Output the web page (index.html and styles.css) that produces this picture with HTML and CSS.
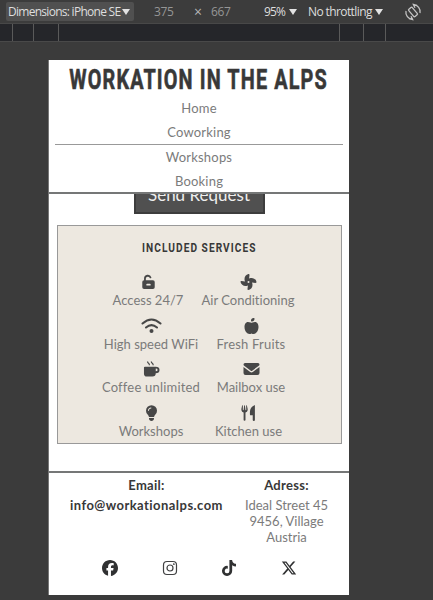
FILE: index.html
```html
<!DOCTYPE html>
<html lang="en">
<head>
<meta charset="utf-8">
<title>Workation in the Alps</title>
<link rel="stylesheet" href="styles.css">
</head>
<body>
<div class="toolbar">
  <div class="device"><span class="t-device">Dimensions: iPhone SE</span><i class="caret"></i></div>
  <span class="dim width">375</span>
  <span class="times">×</span>
  <span class="dim height">667</span>
  <span class="zoom">95%</span><i class="caret"></i>
  <span class="throttle">No throttling</span><i class="caret"></i>
  <svg class="rotate" viewBox="0 0 18 18" fill="none" stroke="#c4c4c4" stroke-width="1.3"><rect x="6.7" y="4.2" width="4.6" height="9.6" rx="1" transform="rotate(-40 9 9)"/><path d="M2 8c-.8 4 2.200 8 6.500 8.500M5 15.500l3.600 1-1.600-3.300M16 10c.8-4-2.200-8-6.500-8.500M13 2.500l-3.600-1 1.600 3.300"/></svg>
</div>
<div class="ruler"><i class="r1"></i><i class="r2"></i><i class="r3"></i><i class="r4"></i><i class="r5"></i><i class="r6"></i></div>
<div class="page">
  <header>
    <h1><span>WORKATION IN THE ALPS</span></h1>
    <nav><a>Home</a><a>Coworking</a><a>Workshops</a><a>Booking</a></nav>
  </header>
  <main>
    <div class="request"><button>Send Request</button></div>
    <section class="services">
      <h2><span>INCLUDED SERVICES</span></h2>
      <div class="row row1">
        <div class="item"><svg viewBox="0 0 16 18"><path fill-rule="evenodd" d="M3 7V5a4.200 4.200 0 0 1 8.200-1.300q.2.9-.7 1.100t-1.200-.6A2.300 2.300 0 0 0 5 5v2h8q2 0 2 2v6q0 2-2 2H3q-2 0-2-2V9q0-2 2-2zm3.500 4q-1 0-1 1t1 1h3q1 0 1-1t-1-1z"/></svg><span>Access 24/7</span></div>
        <div class="item"><svg viewBox="0 0 512 512"><path d="M258.600 0c-1.700 0-3.400 .1-5.100 .5C168 17 115.600 102.300 130.500 189.300c2.900 17 8.400 32.900 15.900 47.400L32 224H29.400C13.200 224 0 237.200 0 253.400c0 1.700 .1 3.400 .5 5.100C17 344 102.300 396.400 189.300 381.500c17-2.900 32.900-8.400 47.400-15.900L224 480v2.600c0 16.200 13.200 29.400 29.400 29.400c1.700 0 3.400-.1 5.100-.5C344 495 396.400 409.700 381.500 322.700c-2.900-17-8.400-32.900-15.900-47.400L480 288h2.600c16.200 0 29.400-13.200 29.400-29.400c0-1.700-.1-3.400-.5-5.100C495 168 409.700 115.600 322.700 130.500c-17 2.900-32.900 8.400-47.400 15.900L288 32V29.400C288 13.200 274.800 0 258.600 0zM256 224a32 32 0 1 1 0 64 32 32 0 1 1 0-64z"/></svg><span>Air Conditioning</span></div>
      </div>
      <div class="row row2">
        <div class="item"><svg class="wifi" viewBox="0 0 20 16"><path class="stroke" d="M1 5.500q9-8 18 0M4.500 9.500q5.500-4.800 11 0"/><circle cx="10" cy="13" r="2"/></svg><span>High speed WiFi</span></div>
        <div class="item"><svg viewBox="0 0 448 512"><path d="M224 112c-8.800 0-16-7.200-16-16V80c0-44.200 35.800-80 80-80h16c8.800 0 16 7.200 16 16V32c0 44.200-35.800 80-80 80H224zM0 288c0-76.300 35.700-160 112-160c27.300 0 59.700 10.300 82.700 19.300c18.800 7.300 39.900 7.300 58.700 0c22.900-8.900 55.400-19.300 82.700-19.300c76.300 0 112 83.700 112 160c0 128-80 224-160 224c-16.500 0-38.100-6.600-51.500-11.300c-8.100-2.800-16.900-2.800-25 0c-13.400 4.700-35 11.300-51.500 11.300C80 512 0 416 0 288z"/></svg><span class="wide">Fresh Fruits</span></div>
      </div>
      <div class="row row3">
        <div class="item"><svg viewBox="0 0 17 17"><path class="thin" d="M4.300.5q0 1.300 1 2t1 2M8.300.5q0 1.300 1 2t1 2"/><path fill-rule="evenodd" d="M1.500 6H13q4 0 4 3.500T13 13q0 3.500-3.500 3.500h-6Q.5 16.500.5 13.500V7q0-1 1-1zM13 8v3q2 0 2-1.500T13 8z"/></svg><span class="wide">Coffee unlimited</span></div>
        <div class="item"><svg viewBox="0 0 16 16"><path d="M1.500 2h13q1.500 0 1.500 1.500 0 .8-.7 1.300L8.700 9.700q-.7.500-1.400 0L.7 4.800Q0 4.300 0 3.500 0 2 1.500 2zM0 6l6.700 5q1.300.9 2.600 0L16 6v6q0 2-2 2H2q-2 0-2-2z"/></svg><span>Mailbox use</span></div>
      </div>
      <div class="row row4">
        <div class="item"><svg viewBox="0 0 384 512"><path fill-rule="evenodd" d="M272 384c10-34 28-57 44-78a176 176 0 1 0-248 0c16 21 34 44 44 78zM192 512c44 0 80-36 80-80v-16H112v16c0 44 36 80 80 80zM112 176c0 9-7 16-16 16s-16-7-16-16c0-53 43-96 96-96 9 0 16 7 16 16s-7 16-16 16c-35 0-64 29-64 64z"/></svg><span>Workshops</span></div>
        <div class="item kitchen"><svg viewBox="0 0 16 17"><path d="M1.200.5Q.2 4.500.5 5.500q.3 1.800 2.300 2.400V16q0 .8 1 .8t1-.8V7.900q2-.6 2.300-2.400.2-1-.8-5-.6-.4-.8 0l.1 4.800q-.5.3-.8 0L4.200.5q-.4-.4-.8 0L2.800 5.300q-.4.300-.8 0L2 .5q-.4-.4-.8 0zM14.800 0Q9.500 2 9.500 7.500V10q0 1 1 1h2v5q0 1 1.200 1t1.100-1z"/></svg><span>Kitchen use</span></div>
      </div>
    </section>
  </main>
  <footer>
    <div class="contacts">
      <div class="email"><b>Email:</b><b class="f-mail">info@workationalps.com</b></div>
      <address><b>Adress:</b><span>Ideal Street 45</span><span>9456, Village</span><span>Austria</span></address>
    </div>
    <div class="social">
      <svg viewBox="0 0 512 512"><path d="M512 256C512 114.600 397.400 0 256 0S0 114.600 0 256C0 376 82.700 476.800 194.200 504.500V334.200H141.400V256h52.800V222.300c0-87.100 39.400-127.500 125-127.500c16.200 0 44.200 3.200 55.700 6.400V172c-6-.6-16.500-1-29.600-1c-42 0-58.200 15.900-58.200 57.200V256h83.600l-14.400 78.200H287V510.100C413.800 494.800 512 386.900 512 256h0z"/></svg>
      <svg viewBox="0 0 16 16" fill="none" stroke="#404142" stroke-width="1.200"><rect x="1.500" y="1.500" width="13" height="13" rx="3.500"/><circle cx="8" cy="8" r="3"/><circle cx="11.800" cy="4.200" r=".3"/></svg>
      <svg viewBox="0 0 448 512"><path d="M448 209.900a210.100 210.100 0 0 1-122.800-39.300V349.400A162.600 162.600 0 1 1 185 188.300V278.200a74.600 74.600 0 1 0 52.200 71.200V0h88a121.200 121.200 0 0 0 1.900 22.200A122.200 122.200 0 0 0 381 102.400a121.400 121.400 0 0 0 67 20.100z"/></svg>
      <svg viewBox="0 0 512 512"><path d="M389.200 48h70.600L305.600 224.200 487 464H345L233.700 318.600 106.500 464H35.800L200.700 275.500 26.800 48H172.400L272.900 180.900 389.200 48zM364.400 421.800h39.100L151.100 88h-42L364.400 421.800z"/></svg>
    </div>
  </footer>
</div>
</body>
</html>
```
FILE: styles.css
```css
* { box-sizing: border-box; }
body { margin: 0; width: 433px; height: 600px; overflow: hidden; background: #3b3b3b; font-family: Lato, sans-serif; font-size: 13px; font-variant-ligatures: none; color: #7b7b7b; }
svg { display: block; fill: #474747; }
.toolbar { height: 24px; display: flex; align-items: center; background: #3c3c3c; border-bottom: 1px solid #484848; font: 12px "Open Sans", sans-serif; color: #dedede; white-space: nowrap; }
.device { margin-left: 6px; width: 128px; height: 19px; padding: 0 4px 0 2px; display: flex; align-items: center; justify-content: space-between; background: #505050; border-radius: 2px; }
.t-device { letter-spacing: -.72px; }
.caret { border: 4px solid transparent; border-top: 6px solid #e2e2e2; border-bottom: 0; flex: none; }
.dim { color: #969696; letter-spacing: -.4px; }
.width { margin-left: 20px; width: 40px; }
.times { width: 17px; color: #b5b5b5; font-size: 14px; }
.height { width: 53px; }
.zoom { width: 25px; letter-spacing: -.8px; }
.throttle { margin-left: 11px; width: 67px; letter-spacing: -.6px; }
.rotate { width: 18px; height: 18px; margin-left: 21px; fill: none; flex: none; }
.ruler { height: 18px; display: flex; background: #25262a; border-bottom: 1px solid #494949; }
.ruler i { border-right: 1px solid #5a5a5a; height: 17px; }
.r1 { width: 13px; } .r2 { width: 21px; } .r3 { width: 25px; } .r4 { width: 281px; } .r5 { width: 24px; } .r6 { width: 22px; }
.page { margin: 18px 0 0 48px; width: 301px; height: 535px; background: #fff; overflow: hidden; border-left: 1px solid #777; text-align: center; }
header { height: 134px; border-bottom: 2px solid #757777; }
h1, h2 { margin: 0; font-family: Roboto, sans-serif; color: #383838; white-space: nowrap; display: flex; justify-content: center; }
h1 { height: 36px; line-height: 39px; font-size: 28px; }
h1 span { flex: none; letter-spacing: 1.6px; transform: scaleX(.708); -webkit-text-stroke: .6px #383838; }
nav { display: grid; grid-template-rows: repeat(4, 24.300px); background: linear-gradient(#999, #999) center 48px / 288px 1px no-repeat; }
nav a { line-height: 24px; letter-spacing: .2px; }
.request { height: 31px; display: flex; justify-content: center; align-items: flex-start; overflow: hidden; }
button { width: 131px; height: 37px; margin-top: -17px; flex: none; padding: 0 0 2px; background: #505050; border: 2px solid #3d3d3d; color: #eee; font: 17px Lato, sans-serif; }
.services { width: 285px; height: 219px; margin: 0 0 0 8px; border: 1px solid #999; background: #ede8e0; }
h2 { height: 46px; line-height: 43px; font-size: 13.500px; }
h2 span { letter-spacing: 1.400px; transform: scaleX(.75); }
.row { height: 43.500px; display: flex; }
.item { width: 100px; display: flex; flex-direction: column; align-items: center; white-space: nowrap; }
.item svg { height: 16px; width: 17px; margin-top: 2px; }
.item svg.wifi { width: 21px; }
.item span { line-height: 18px; margin-top: 1px; }
.item .wide { letter-spacing: .2px; }
.kitchen { width: 95px; }
.stroke { fill: none; stroke: #474747; stroke-width: 2; stroke-linecap: round; }
.thin { fill: none; stroke: #474747; stroke-width: 1.300; }
.row1 { padding-left: 40px; } .row2 { padding-left: 43px; } .row3 { padding-left: 43px; } .row4 { padding-left: 43px; }
footer { height: 123px; margin-top: 27px; border-top: 2px solid #757777; }
.contacts { display: flex; height: 87px; padding-top: 2px; }
.email { width: 195px; display: flex; flex-direction: column; align-items: center; }
address { width: 85px; font-style: normal; display: flex; flex-direction: column; align-items: center; white-space: nowrap; }
.contacts b { color: #383838; line-height: 20px; font-weight: 700; letter-spacing: .3px; }
.contacts .f-mail { letter-spacing: .45px; }
address b { margin-bottom: 2px; }
address span { line-height: 16px; }
.social { display: flex; gap: 43.500px; margin-left: 53px; }
.social svg { width: 16px; height: 16px; fill: #303132; }
.social svg:nth-child(2) { fill: none; }
```
